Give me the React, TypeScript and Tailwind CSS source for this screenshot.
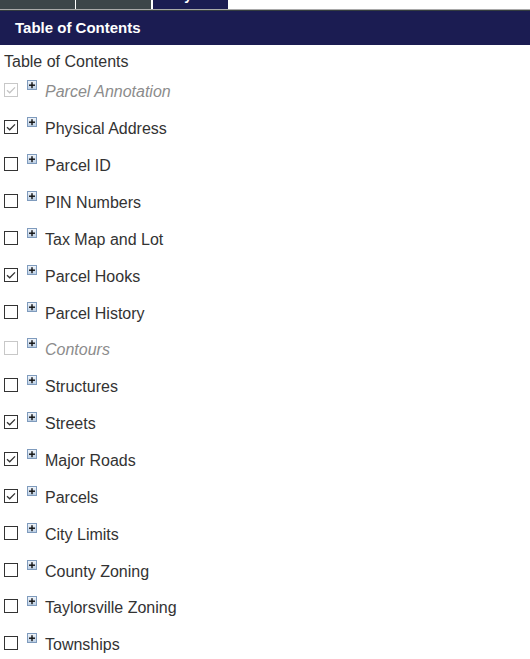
import React from "react";

type Layer = { name: string; checked: boolean; disabled?: boolean };

const layers: Layer[] = [
  { name: "Parcel Annotation", checked: true, disabled: true },
  { name: "Physical Address", checked: true },
  { name: "Parcel ID", checked: false },
  { name: "PIN Numbers", checked: false },
  { name: "Tax Map and Lot", checked: false },
  { name: "Parcel Hooks", checked: true },
  { name: "Parcel History", checked: false },
  { name: "Contours", checked: false, disabled: true },
  { name: "Structures", checked: false },
  { name: "Streets", checked: true },
  { name: "Major Roads", checked: true },
  { name: "Parcels", checked: true },
  { name: "City Limits", checked: false },
  { name: "County Zoning", checked: false },
  { name: "Taylorsville Zoning", checked: false },
  { name: "Townships", checked: false },
];

function CheckBox({ checked, disabled }: { checked: boolean; disabled?: boolean }) {
  const color = disabled ? "#c4c4c4" : "#333333";
  return (
    <span
      className={
        "flex h-[14px] w-[14px] shrink-0 items-center justify-center border bg-white " +
        (disabled ? "border-[#c8c8c8]" : "border-[#333333]")
      }
    >
      {checked && (
        <svg width="12" height="12" viewBox="0 0 12 12">
          <path d="M2 6.2 L4.7 8.8 L10 3.4" fill="none" stroke={color} strokeWidth="1.3" />
        </svg>
      )}
    </span>
  );
}

function PlusIcon() {
  return (
    <svg width="10" height="10" viewBox="0 0 10 10" className="shrink-0">
      <defs>
        <linearGradient id="pg" x1="0" y1="0" x2="0" y2="1">
          <stop offset="0" stopColor="#f2f6fb" />
          <stop offset="1" stopColor="#b9cde3" />
        </linearGradient>
      </defs>
      <rect x="0.5" y="0.5" width="9" height="9" fill="url(#pg)" stroke="#7f9bbd" />
      <rect x="2" y="4.5" width="6" height="1.4" fill="#111" />
      <rect x="4.3" y="2.2" width="1.4" height="6" fill="#111" />
    </svg>
  );
}

export default function App() {
  return (
    <div className="w-[530px] h-[659px] overflow-hidden bg-white font-['Liberation_Sans',Arial,sans-serif]">
      <div className="flex h-[9px] bg-white">
        <div className="w-[75px] bg-[#3c4549]" />
        <div className="ml-[1px] w-[75px] bg-[#3c4549]" />
        <div className="ml-[2px] w-[75px] overflow-hidden bg-[#1b1c52] text-center">
          <div className="-mt-[13px] text-[14px] font-bold leading-[16px] text-white">Layers</div>
        </div>
      </div>
      <div className="h-[1px] bg-[#a9a9a9]" />
      <div className="h-[1px] bg-[#333b3f]" />
      <div className="flex h-[34px] items-center bg-[#1b1c52] pl-[15px] text-[15px] font-bold text-white">
        Table of Contents
      </div>
      <div className="h-[29px] pl-[4px] pt-[8px] text-[16px] leading-[18px] text-[#333333]">
        Table of Contents
      </div>
      <div className="flex flex-col">
        {layers.map((l) => (
          <div key={l.name} className="flex h-[36.87px] items-center pl-[4px]">
            <span className="mb-[4px]">
              <CheckBox checked={l.checked} disabled={l.disabled} />
            </span>
            <span className="mb-[14px] ml-[9px]">
              <PlusIcon />
            </span>
            <span
              className={
                "ml-[8px] text-[16px] leading-[18px] " +
                (l.disabled ? "italic text-[#8c8c8c]" : "text-[#333333]")
              }
            >
              {l.name}
            </span>
          </div>
        ))}
      </div>
    </div>
  );
}
